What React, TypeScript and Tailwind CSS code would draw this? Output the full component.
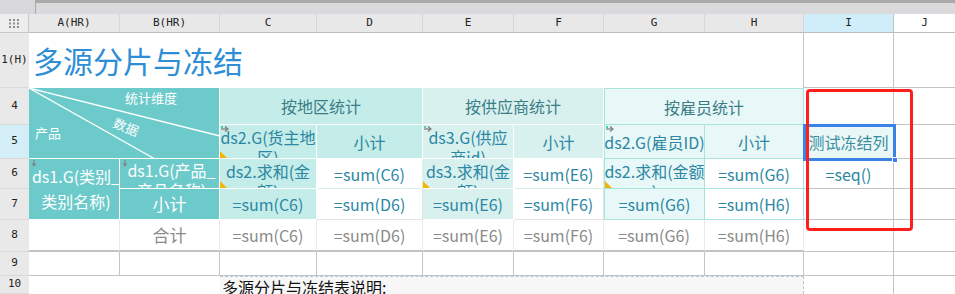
import React from 'react';

const CELL = 'flex items-center justify-center overflow-hidden box-border text-[16px] leading-[20px]';
const MONO = { fontFamily: '"DejaVu Sans Mono", "Liberation Mono", monospace' };

const Cell: React.FC<{ className: string; style?: React.CSSProperties; children?: React.ReactNode }> = ({ className, style, children }) => (
  <div className={`${CELL} ${className}`} style={style}>{children}</div>
);

// gray arrow marker on group cells
const ArrowMark = () => (
  <svg className="absolute left-[1px] top-[1px]" width="8" height="6" viewBox="0 0 8 6">
    <path d="M0 3 H6" stroke="#7a7a7a" strokeWidth="1.2" />
    <path d="M4 0.5 L7 3 L4 5.5" fill="none" stroke="#7a7a7a" strokeWidth="1.2" />
    <rect x="0" y="0" width="2" height="2" fill="#3fd6b0" />
  </svg>
);

const DownMark = () => (
  <svg className="absolute left-[2px] top-[1px]" width="6" height="7" viewBox="0 0 6 7">
    <path d="M3 0 V6" stroke="#808080" strokeWidth="1.2" />
    <path d="M0.5 3.5 L3 6.5 L5.5 3.5" fill="#808080" />
  </svg>
);

const YellowMark = () => (
  <svg className="absolute left-0 bottom-0" width="7" height="7" viewBox="0 0 7 7">
    <path d="M0 0 L7 7 H0 Z" fill="#f5b400" />
  </svg>
);

const colHeaders = ['A(HR)', 'B(HR)', 'C', 'D', 'E', 'F', 'G', 'H'];
const rowHeaders = ['1(H)', '4', '5', '6', '7', '8', '9', '10'];

export default function App() {
  return (
    <div
      className="relative w-[955px] h-[294px] overflow-hidden bg-white"
      style={{ fontFamily: '"Noto Sans CJK SC", "Noto Sans", sans-serif' }}
    >
      {/* top strip */}
      <div className="h-[14px] bg-[#d8d8db] flex">
        <div className="w-[35px]" />
        <div className="flex-1 border-l border-t-[3px] border-[#a9a9a9] bg-[#dadadd]" />
      </div>

      <div className="grid grid-cols-[29px_91px_100px_97px_106px_91px_90px_101px_99px_90px_61px] grid-rows-[19px_55px_37px_34px_30px_31px_32px_24px_18px]">
        {/* column header row */}
        <div className="row-start-1 col-start-1 bg-[#ededed] border-b border-r border-[#c8c8c8] flex items-center justify-center">
          <svg width="11" height="9" viewBox="0 0 11 9">
            {[0, 4, 8].map(x => [0, 3.5, 7].map(y => (
              <rect key={`${x}-${y}`} x={x} y={y} width="2" height="2" fill="#8e8e8e" />
            )))}
          </svg>
        </div>
        {colHeaders.map((h, i) => (
          <div
            key={h}
            style={{ ...MONO, gridColumnStart: i + 2 }}
            className="row-start-1 bg-[#e8e8e8] border-r border-b border-r-[#d6d6d6] border-b-[#bcbcbc] flex items-center justify-center text-[11px] text-[#222]"
          >
            {h}
          </div>
        ))}
        <div style={MONO} className="row-start-1 col-start-10 bg-[#d0eef9] border-r border-b border-r-[#c4c4c4] border-b-[#bcbcbc] flex items-center justify-center text-[11px] text-[#222]">I</div>
        <div style={MONO} className="row-start-1 col-start-11 bg-white border-b border-[#bcbcbc] flex items-center justify-center text-[11px] text-[#222]">J</div>

        {/* row headers */}
        {rowHeaders.map((r, i) => (
          <div
            key={r}
            style={{ ...MONO, gridRowStart: i + 2 }}
            className={`col-start-1 border-b border-[#d9d9d9] flex items-center justify-center text-[11px] text-[#222] ${r === '5' ? 'bg-[#d4eef8]' : 'bg-[#e9e9e9]'}`}
          >
            {r}
          </div>
        ))}

        {/* row 1: title */}
        <div className="row-start-2 col-start-2 col-span-8 flex items-center pl-[4px] border-r border-[#c4c4c4] text-[30px] text-[#2d8ed6]">
          多源分片与冻结
        </div>
        <Cell className="row-start-2 col-start-10 border-r border-b border-[#c4c4c4]" />
        <Cell className="row-start-2 col-start-11 border-b border-[#c4c4c4]" />

        {/* row 4-5: diagonal header */}
        <div className="relative row-start-3 row-span-2 col-start-2 col-span-2 bg-[#6ccacb] border-r border-b border-white text-white text-[13px]">
          <svg className="absolute inset-0" width="191" height="71" viewBox="0 0 191 71">
            <line x1="0" y1="0" x2="191" y2="48" stroke="white" strokeWidth="1.3" />
            <line x1="0" y1="0" x2="126" y2="71" stroke="white" strokeWidth="1.3" />
          </svg>
          <span className="absolute left-[96px] top-[1px] leading-[18px]">统计维度</span>
          <span className="absolute left-[84px] top-[30px] leading-[18px] rotate-[22deg]">数据</span>
          <span className="absolute left-[6px] top-[36px] leading-[18px]">产品</span>
        </div>
        <Cell className="row-start-3 col-start-4 col-span-2 bg-[#c4ece8] border-r border-b border-white text-[#3a7d86]">按地区统计</Cell>
        <Cell className="row-start-3 col-start-6 col-span-2 bg-[#d8f1ef] border-r border-b border-white text-[#3a7d86]">按供应商统计</Cell>
        <Cell className="row-start-3 col-start-8 col-span-2 bg-[#e8f7f7] border border-[#a9e3dd] text-[#3a7d86]">按雇员统计</Cell>
        <Cell className="row-start-3 col-start-10 border-r border-b border-[#c4c4c4]" />
        <Cell className="row-start-3 col-start-11 border-b border-[#c4c4c4]" />

        {/* row 5 */}
        <Cell className="relative row-start-4 col-start-4 bg-[#c4ece8] border-r border-b border-white text-[#2b87a3] !items-start pt-[2px]">
          <ArrowMark />
          <div className="text-center whitespace-nowrap">ds2.G(货主地<br />区)</div>
          <YellowMark />
        </Cell>
        <Cell className="row-start-4 col-start-5 bg-[#c4ece8] border-r border-b border-white text-[#2b87a3]">小计</Cell>
        <Cell className="relative row-start-4 col-start-6 bg-[#d8f1ef] border-r border-b border-white text-[#2b87a3] !items-start pt-[2px]">
          <ArrowMark />
          <div className="text-center whitespace-nowrap">ds3.G(供应<br />商id)</div>
        </Cell>
        <Cell className="row-start-4 col-start-7 bg-[#d8f1ef] border-r border-b border-white text-[#2b87a3]">小计</Cell>
        <Cell className="relative row-start-4 col-start-8 bg-[#e8f7f7] border-r border-b border-l border-[#a9e3dd] text-[#2b87a3] whitespace-nowrap">
          <ArrowMark />
          ds2.G(雇员ID)
        </Cell>
        <Cell className="row-start-4 col-start-9 bg-[#e8f7f7] border-r border-b border-[#a9e3dd] text-[#2b87a3]">小计</Cell>
        <Cell className="row-start-4 col-start-10 bg-[#e9f7f7] border-r border-b border-[#c4c4c4] text-[#3a8ea0]">测试冻结列</Cell>
        <Cell className="row-start-4 col-start-11 border-b border-[#c4c4c4]" />

        {/* row 6-7 */}
        <Cell className="relative row-start-5 row-span-2 col-start-2 bg-[#6ccacb] border-r border-b border-white text-white text-[15px] !leading-[25px]">
          <DownMark />
          <div className="text-center whitespace-nowrap pl-[4px]">ds1.G(类别_<br />类别名称)</div>
        </Cell>
        <Cell className="relative row-start-5 col-start-3 bg-[#6ccacb] border-r border-b border-white text-white text-[15px] !items-start pt-[1px]">
          <DownMark />
          <div className="text-center whitespace-nowrap pl-[4px]">ds1.G(产品_<br />产品名称)</div>
        </Cell>
        <Cell className="relative row-start-5 col-start-4 bg-[#c4ece8] border-r border-b border-white text-[#2b87a3] !items-start pt-[2px]">
          <div className="text-center whitespace-nowrap">ds2.求和(金<br />额)</div>
          <YellowMark />
        </Cell>
        <Cell className="row-start-5 col-start-5 bg-white border-r border-b border-[#d8f1ef] text-[#2b87a3]">=sum(C6)</Cell>
        <Cell className="relative row-start-5 col-start-6 bg-[#d8f1ef] border-r border-b border-white text-[#2b87a3] !items-start pt-[2px]">
          <div className="text-center whitespace-nowrap">ds3.求和(金<br />额)</div>
          <YellowMark />
        </Cell>
        <Cell className="row-start-5 col-start-7 bg-white border-r border-b border-[#d8f1ef] text-[#2b87a3]">=sum(E6)</Cell>
        <Cell className="relative row-start-5 col-start-8 bg-[#e8f7f7] border-r border-b border-l border-[#a9e3dd] text-[#2b87a3] !items-start pt-[2px]">
          <div className="text-center whitespace-nowrap">ds2.求和(金额<br />)</div>
          <YellowMark />
        </Cell>
        <Cell className="row-start-5 col-start-9 bg-white border-r border-b border-[#a9e3dd] text-[#2b87a3]">=sum(G6)</Cell>
        <Cell className="row-start-5 col-start-10 bg-white border-r border-b border-[#c4c4c4] text-[#2b87a3]">=seq()</Cell>
        <Cell className="row-start-5 col-start-11 border-b border-[#c4c4c4]" />

        <Cell className="row-start-6 col-start-3 bg-[#6ccacb] border-r border-b border-white text-white text-[17px]">小计</Cell>
        <Cell className="row-start-6 col-start-4 bg-[#c4ece8] border-r border-b border-white text-[#2b87a3]">=sum(C6)</Cell>
        <Cell className="row-start-6 col-start-5 bg-white border-r border-b border-[#e4e4e4] text-[#2b87a3]">=sum(D6)</Cell>
        <Cell className="row-start-6 col-start-6 bg-[#d8f1ef] border-r border-b border-white text-[#2b87a3]">=sum(E6)</Cell>
        <Cell className="row-start-6 col-start-7 bg-white border-r border-b border-[#e4e4e4] text-[#2b87a3]">=sum(F6)</Cell>
        <Cell className="row-start-6 col-start-8 bg-[#e8f7f7] border-r border-b border-l border-[#a9e3dd] text-[#2b87a3]">=sum(G6)</Cell>
        <Cell className="row-start-6 col-start-9 bg-white border-r border-b border-[#a9e3dd] text-[#2b87a3]">=sum(H6)</Cell>
        <Cell className="row-start-6 col-start-10 border-r border-b border-[#c4c4c4]" />
        <Cell className="row-start-6 col-start-11 border-b border-[#c4c4c4]" />

        {/* row 8 */}
        <Cell className="row-start-7 col-start-2 border-r border-b-2 border-r-[#eaeaea] border-b-[#c2c2c2]" />
        <Cell className="row-start-7 col-start-3 border-r border-b-2 border-r-[#eaeaea] border-b-[#c2c2c2] text-[#8a8a8a] text-[17px]">合计</Cell>
        {['C6', 'D6', 'E6', 'F6', 'G6', 'H6'].map((c, i) => (
          <Cell
            key={c}
            style={{ gridColumnStart: i + 4 }}
            className="row-start-7 border-r border-b-2 border-r-[#eaeaea] border-b-[#c2c2c2] text-[#8a8a8a]"
          >
            =sum({c})
          </Cell>
        ))}
        <Cell className="row-start-7 col-start-10 border-r border-b border-[#c4c4c4]" />
        <Cell className="row-start-7 col-start-11 border-b border-[#c4c4c4]" />

        {/* row 9 */}
        {[2, 3, 4, 5, 6, 7, 8, 9, 10].map(c => (
          <div
            key={c}
            style={{ gridColumnStart: c }}
            className="row-start-8 border-r border-b border-[#c4c4c4]"
          />
        ))}
        <div className="row-start-8 col-start-11 border-b border-[#c4c4c4]" />

        {/* row 10 */}
        <div className="row-start-9 col-start-2 col-span-2" />
        <div className="row-start-9 col-start-4 col-span-6 bg-[#f7f7f7] border-t border-dashed border-[#a9c9e6] border-r border-r-[#c4c4c4] pl-[2px] text-[16px] leading-[20px] text-[#111] whitespace-nowrap overflow-hidden">
          多源分片与冻结表说明:
        </div>
        <div className="row-start-9 col-start-10 border-r border-[#c4c4c4]" />
        <div className="row-start-9 col-start-11" />
      </div>

      {/* selection and highlight overlays */}
      <div className="absolute left-[803px] top-[124px] w-[93px] h-[37px] border-[3px] border-[#3b82e6]">
        <div className="absolute right-[-5px] bottom-[-5px] w-[6px] h-[6px] bg-[#3b82e6] border border-white" />
      </div>
      <div className="absolute left-[806px] top-[89px] w-[107px] h-[142px] border-[3px] border-[#ff1e1e] rounded-[4px]" />
    </div>
  );
}
